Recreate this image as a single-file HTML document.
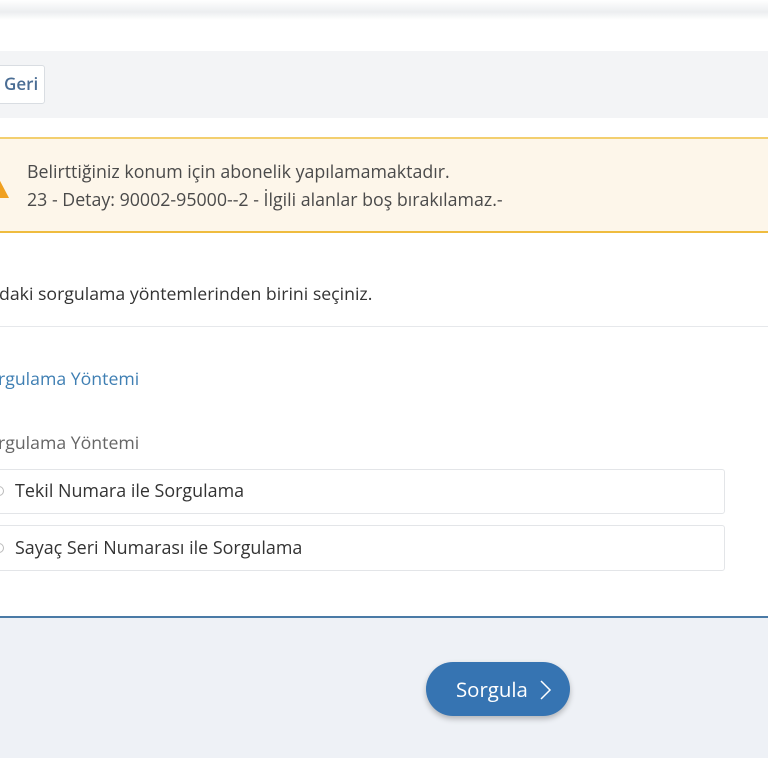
<!DOCTYPE html>
<html><head><meta charset="utf-8"><style>
*{margin:0;padding:0;box-sizing:border-box}
body{width:768px;height:768px;overflow:hidden;background:#fff;font-family:"Open Sans","Liberation Sans",sans-serif;position:relative;color:#333}
.a{position:absolute;white-space:nowrap}
</style></head><body>
<div class="a" style="left:0;top:0;width:768px;height:20px;background:linear-gradient(#fff,#eceef0 60%,#fff)"></div>
<div class="a" style="left:0;top:51px;width:768px;height:67px;background:#f3f4f6"></div>
<div class="a" style="left:-10px;top:65px;width:55px;height:39px;background:#fff;border:1px solid #d9dde2;border-radius:3px"></div>
<div class="a" style="left:4px;top:72px;font-size:17px;font-weight:600;color:#4a6d94">Geri</div>
<div class="a" style="left:0;top:137px;width:768px;height:96px;background:#fdf6ea;border-top:2px solid #f3cf6f;border-bottom:2px solid #efbc3f"></div>
<svg class="a" style="left:-12px;top:178px" width="22" height="22" viewBox="0 0 22 22"><path d="M11 1L21 20H1Z" fill="#f0a020"/></svg>
<div class="a" style="left:27px;top:158px;font-size:17.8px;color:#4a4a4a;line-height:28px">Belirttiğiniz konum için abonelik yapılamamaktadır.<br>23 - Detay: 90002-95000--2 - İlgili alanlar boş bırakılamaz.-</div>
<div class="a" style="left:-1px;top:282px;font-size:17.7px;color:#333">daki sorgulama yöntemlerinden birini seçiniz.</div>
<div class="a" style="left:0;top:326px;width:768px;height:1px;background:#e6e8eb"></div>
<div class="a" style="left:-2px;top:367px;font-size:17.7px;color:#3f7fb3">rgulama Yöntemi</div>
<div class="a" style="left:-2px;top:431px;font-size:17.7px;color:#666">rgulama Yöntemi</div>
<div class="a" style="left:-10px;top:469px;width:735px;height:45px;border:1px solid #e3e5e8;border-radius:3px"></div>
<div class="a" style="left:-10px;top:525px;width:735px;height:46px;border:1px solid #e3e5e8;border-radius:3px"></div>
<div class="a" style="left:-6px;top:486px;width:10px;height:10px;border:1px solid #bbb;border-radius:50%"></div>
<div class="a" style="left:-6px;top:543px;width:10px;height:10px;border:1px solid #bbb;border-radius:50%"></div>
<div class="a" style="left:15px;top:479px;font-size:17.9px;color:#333">Tekil Numara ile Sorgulama</div>
<div class="a" style="left:15px;top:536px;font-size:17.9px;color:#333">Sayaç Seri Numarası ile Sorgulama</div>
<div class="a" style="left:0;top:616px;width:768px;height:142px;background:#eef1f6;border-top:2px solid #4a7aa6"></div>
<div class="a" style="left:426px;top:662px;width:144px;height:54px;border-radius:27px;background:#3674b2;box-shadow:0 3px 6px rgba(0,0,0,.25)"></div>
<div class="a" style="left:456px;top:675px;font-size:20.4px;color:#fff">Sorgula</div>
<svg class="a" style="left:538px;top:679px" width="14" height="22" viewBox="0 0 14 22"><path d="M3 2L12 11L3 20" fill="none" stroke="#fff" stroke-width="1.5"/></svg>
</body></html>
